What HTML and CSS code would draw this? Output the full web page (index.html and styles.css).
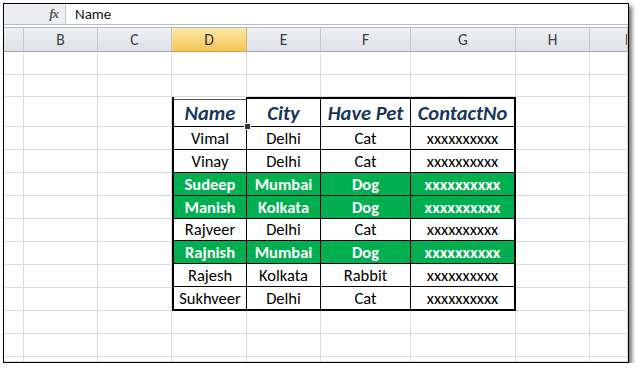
FILE: index.html
```html
<!DOCTYPE html>
<html>
<head>
<meta charset="utf-8">
<link rel="stylesheet" href="styles.css">
</head>
<body>
<div class="frame">
  <div class="fbar">
    <div class="fxbox"><span class="fx">fx</span></div>
    <div class="fval">Name</div>
  </div>
  <div class="sheet">
    <div class="ch"></div><div class="ch">B</div><div class="ch">C</div><div class="ch on">D</div><div class="ch">E</div><div class="ch">F</div><div class="ch">G</div><div class="ch">H</div><div class="ch last">I</div>

    <div class="tbl">
      <div class="th sel">Name</div><div class="th">City</div><div class="th">Have Pet</div><div class="th">ContactNo</div>
      <div class="td">Vimal</div><div class="td">Delhi</div><div class="td">Cat</div><div class="td">xxxxxxxxxx</div>
      <div class="td">Vinay</div><div class="td">Delhi</div><div class="td">Cat</div><div class="td">xxxxxxxxxx</div>
      <div class="td g">Sudeep</div><div class="td g">Mumbai</div><div class="td g">Dog</div><div class="td g">xxxxxxxxxx</div>
      <div class="td g">Manish</div><div class="td g">Kolkata</div><div class="td g">Dog</div><div class="td g">xxxxxxxxxx</div>
      <div class="td">Rajveer</div><div class="td">Delhi</div><div class="td">Cat</div><div class="td">xxxxxxxxxx</div>
      <div class="td g">Rajnish</div><div class="td g">Mumbai</div><div class="td g">Dog</div><div class="td g">xxxxxxxxxx</div>
      <div class="td">Rajesh</div><div class="td">Kolkata</div><div class="td">Rabbit</div><div class="td">xxxxxxxxxx</div>
      <div class="td">Sukhveer</div><div class="td">Delhi</div><div class="td">Cat</div><div class="td">xxxxxxxxxx</div>
    </div>

    <div class="c"></div><div class="c"></div><div class="c"></div><div class="c"></div><div class="c"></div><div class="c"></div><div class="c"></div><div class="c"></div><div class="c"></div>
    <div class="c"></div><div class="c"></div><div class="c"></div><div class="c"></div><div class="c"></div><div class="c"></div><div class="c"></div><div class="c"></div><div class="c"></div>

    <div class="c"></div><div class="c"></div><div class="c"></div><div class="c"></div><div class="c"></div>
    <div class="c"></div><div class="c"></div><div class="c"></div><div class="c"></div><div class="c"></div>
    <div class="c"></div><div class="c"></div><div class="c"></div><div class="c"></div><div class="c"></div>
    <div class="c"></div><div class="c"></div><div class="c"></div><div class="c"></div><div class="c"></div>
    <div class="c"></div><div class="c"></div><div class="c"></div><div class="c"></div><div class="c"></div>
    <div class="c"></div><div class="c"></div><div class="c"></div><div class="c"></div><div class="c"></div>
    <div class="c"></div><div class="c"></div><div class="c"></div><div class="c"></div><div class="c"></div>
    <div class="c"></div><div class="c"></div><div class="c"></div><div class="c"></div><div class="c"></div>
    <div class="c"></div><div class="c"></div><div class="c"></div><div class="c"></div><div class="c"></div>

    <div class="c"></div><div class="c"></div><div class="c"></div><div class="c"></div><div class="c"></div><div class="c"></div><div class="c"></div><div class="c"></div><div class="c"></div>
    <div class="c"></div><div class="c"></div><div class="c"></div><div class="c"></div><div class="c"></div><div class="c"></div><div class="c"></div><div class="c"></div><div class="c"></div>
    <div class="c"></div><div class="c"></div><div class="c"></div><div class="c"></div><div class="c"></div><div class="c"></div><div class="c"></div><div class="c"></div><div class="c"></div>
  </div>
</div>
</body>
</html>
```

FILE: styles.css
```css
html, body {
  margin: 0;
  padding: 0;
  background: #fff;
}
body {
  font-family: Carlito, Lato, "Liberation Sans", sans-serif;
}
.frame {
  box-sizing: border-box;
  margin: 3px 0 0 3px;
  width: 626px;
  height: 360px;
  border: 1px solid #000;
  box-shadow: 3px 3px 4px rgba(0, 0, 0, 0.55);
  background: #fff;
  overflow: hidden;
  display: flex;
  flex-direction: column;
}
.fbar {
  box-sizing: border-box;
  height: 21px;
  flex: none;
  display: flex;
  border-bottom: 1px solid #b7bcc3;
  margin-bottom: 2px;
}
.fxbox {
  box-sizing: border-box;
  width: 62px;
  background: #eceef1;
  border-right: 1px solid #c9cdd3;
  display: flex;
  align-items: center;
  justify-content: flex-end;
  padding-right: 7px;
}
.fx {
  font-family: "Liberation Serif", serif;
  font-style: italic;
  font-weight: bold;
  font-size: 13px;
  color: #555;
  letter-spacing: -1px;
}
.fval {
  padding-left: 9px;
  font-size: 15px;
  line-height: 20px;
  color: #111;
}
.sheet {
  flex: 1;
  display: grid;
  grid-template-columns: 20px 74px 74px 75px 74px 90px 105px 74px 1fr;
  grid-template-rows: 25px 23px 22px 30px repeat(8, 23px) 23px 23px 1fr;
}
.ch {
  box-sizing: border-box;
  border-top: 1px solid #b3b9c1;
  border-right: 1px solid #c3c8cf;
  border-bottom: 1px solid #9fa6ae;
  background: linear-gradient(#eef0f3, #dde1e7);
  color: #3c3c3c;
  font-size: 15.5px;
  display: flex;
  align-items: center;
  justify-content: center;
}
.ch.on {
  background: linear-gradient(#fce9a8, #f5c457);
  border-bottom-color: #d7a34a;
  border-right-color: #d9b46a;
  color: #333;
}
.ch.last {
  justify-content: flex-start;
  padding-left: 35px;
  overflow: hidden;
  font-weight: bold;
  color: #444;
}
.c {
  box-sizing: border-box;
  border-right: 1px solid #dadcdf;
  border-bottom: 1px solid #dadcdf;
}
.tbl {
  grid-column: 4 / 8;
  grid-row: 4 / 13;
  box-sizing: border-box;
  display: grid;
  grid-template-columns: 72px 73px 89px 1fr;
  grid-template-rows: 29px repeat(8, 1fr);
  gap: 1px;
  background: #000;
  border: 2px solid #000;
  border-top: 0;
}
.th, .td {
  background: #fff;
  display: flex;
  align-items: center;
  justify-content: center;
  white-space: nowrap;
}
.th {
  box-sizing: border-box;
  border-top: 2px solid #000;
  font-size: 20.5px;
  font-weight: bold;
  font-style: italic;
  color: #17375e;
  padding-top: 1px;
}
.th.sel {
  position: relative;
  border-top-color: #fff;
  box-shadow: inset 0 1px 0 #555;
}
.th.sel::after {
  content: "";
  position: absolute;
  right: -5px;
  bottom: -4px;
  width: 5px;
  height: 5px;
  background: #333;
  border: 1px solid #fff;
  z-index: 2;
}
.td {
  font-size: 16.5px;
  color: #000;
}
.td.g {
  background: #00b050;
  color: #fff;
  font-weight: bold;
}
```
